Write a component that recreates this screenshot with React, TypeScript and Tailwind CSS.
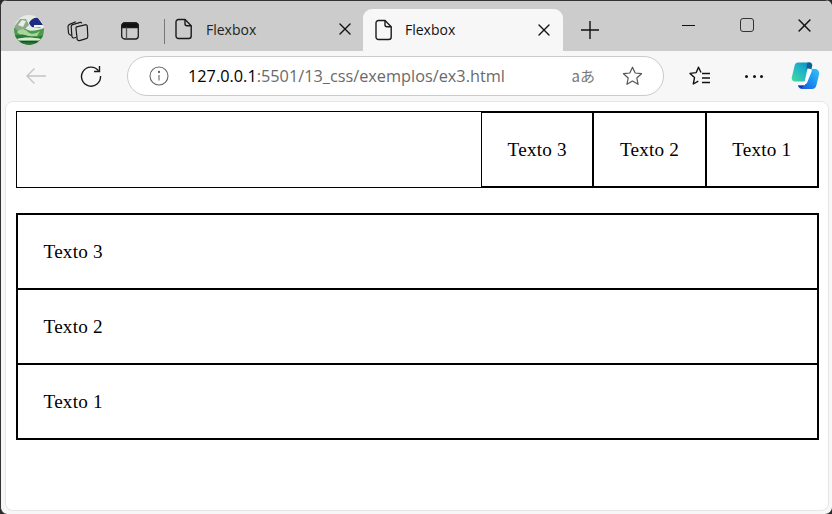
const uiFont = { fontFamily: '"Open Sans", "Noto Sans", sans-serif' };

function FileIcon() {
  return (
    <svg width="18" height="22" viewBox="0 0 18 22" fill="none" stroke="#1a1a1a" strokeWidth="1.4" strokeLinejoin="round">
      <path d="M3.5 1.5h6.5l6.2 6.2V18a2.5 2.5 0 0 1-2.5 2.5H3.5A2.5 2.5 0 0 1 1 18V4a2.5 2.5 0 0 1 2.5-2.5Z" />
      <path d="M10 1.5v4.2a2 2 0 0 0 2 2h4.2" />
    </svg>
  );
}

function CloseIcon({ size = 12 }: { size?: number }) {
  return (
    <svg width={size} height={size} viewBox="0 0 12 12" stroke="#111" strokeWidth="1.4" strokeLinecap="round">
      <path d="M1 1l10 10M11 1L1 11" />
    </svg>
  );
}

function Profile() {
  return (
    <svg width="30" height="30" viewBox="0 0 30 30" className="shrink-0">
      <defs>
        <clipPath id="avatar"><circle cx="15" cy="15" r="15" /></clipPath>
      </defs>
      <g clipPath="url(#avatar)">
        <rect width="30" height="30" fill="#e4ebe0" />
        <path d="M0 13c4-3 8-2 12 1s10 2 18-1v17H0Z" fill="#4c9b4c" />
        <path d="M0 12 6 4h6l3 6-5 5-6 1Z" fill="#8fa88c" />
        <path d="M4 10l4-5 4 1-3 6Z" fill="#e8eee6" />
        <path d="M15 8c2-4 6-6 9-5l5 7-3 3-8-1c-1-1-2-2-3-4Z" fill="#1d2c80" />
        <path d="M20 10h9v2.500h-9Z" fill="#f0f3ee" />
        <path d="M3 17c4-4 8-3 11 0s8 2 12-1l-3 5H7Z" fill="#a8d79c" />
        <path d="M0 21c5-2 9-2 14 0s10 1 16-1v10H0Z" fill="#2b7a38" />
        <path d="M3 24c6-2 16-2 24 0v1.500H3Z" fill="#d9ecd0" />
        <rect x="7" y="26" width="16" height="1.500" fill="#1e4f28" />
      </g>
    </svg>
  );
}

function Copilot() {
  return (
    <svg width="30" height="28" viewBox="0 0 30 28">
      <defs>
        <linearGradient id="cpA" x1="0" y1="1" x2="1" y2="0">
          <stop offset="0" stopColor="#45dc9c" />
          <stop offset="0.55" stopColor="#1fb3c8" />
          <stop offset="1" stopColor="#0f7fc4" />
        </linearGradient>
        <linearGradient id="cpB" x1="0" y1="1" x2="1" y2="0">
          <stop offset="0" stopColor="#1a50dc" />
          <stop offset="0.5" stopColor="#1a90f0" />
          <stop offset="1" stopColor="#38c4f6" />
        </linearGradient>
      </defs>
      <path d="M8 .5h11c2.500 0 3.800 2 3 4.200L17 18c-.5 1-1.200 1.500-2.500 1.500H5C2.500 19.500 1 17 2 14.500L4.500 4C5 2 6 .5 8 .5Z" fill="url(#cpA)" />
      <path d="M17.500 .5H19c2.500 0 3.800 2 3 4.200L21 8l-4 1c-.4-3-.5-6 .5-8.500Z" fill="#0f5f96" />
      <path d="M17 7h8c3 0 4.800 2.500 4 5.500L26.500 23c-.6 2.500-2 4-4.500 4H12c-2 0-3.500-1.200-4-3.500h5c1.500 0 2.500-.6 3-2L21 10c.4-1.300-1-2.500-4-3Z" fill="url(#cpB)" />
      <path d="M8 23.500h5.500c1.500 0 2.500-.6 3-2l1-2.500c-1 2-4 6-6 7-2-.5-3-1.500-3.500-2.500Z" fill="#1238b8" />
      <path d="M17.500 6.500 21 7c1 .5 1 1.500.6 2.500l-4.400 11c-.5 1.200-1.300 1.800-2.600 1.800H11.500c2-.8 2.800-2 3.300-3.300Z" fill="#ffffff" />
    </svg>
  );
}

function FlexItem({ label }: { label: string }) {
  return (
    <div className="border border-black px-[25.6px] pt-[25.8px] pb-[25px] text-[19.2px] leading-[22px] tracking-[0.19px]">{label}</div>
  );
}

export default function App() {
  const labels = ["Texto 1", "Texto 2", "Texto 3"];

  return (
    <div className="h-[514px] w-[832px] overflow-hidden bg-[#2a2a2a]">
      <div className="h-[514px] w-[832px] overflow-hidden bg-[#f7f7f7] flex flex-col rounded-[7px] border-l border-[#333]" style={uiFont}>
        {/* tab strip */}
        <div className="h-[51px] shrink-0 bg-[#cccccc] border-t border-[#333] flex pl-[13px]">
          <div className="mt-[14px] flex items-start">
            <Profile />
            <svg width="22" height="22" viewBox="0 0 22 22" fill="none" stroke="#1a1a1a" strokeWidth="1.2" strokeLinejoin="round" className="ml-[23px] mt-[5px] shrink-0">
              <path d="M9.500 6.800 18 4.800c1.200-.3 2.200.4 2.300 1.600l.5 10c.1 1.200-.5 2-1.600 2.300l-6.700 1.900c-1.300.3-2.300-.4-2.400-1.700L9 8.500c-.1-.8.000-1.500.5-1.700Z" />
              <path d="M9.200 17.500 6.200 18c-.8-.3-1.200-1-1.300-1.800l-.7-9.500c-.1-1 .4-1.800 1.400-2.100l7.600-2.200c.7-.1 1.300.2 1.600 1" />
              <path d="M4.500 15.500 2.500 14.500c-.6-.4-.9-1-1-1.800L1 7c-.1-1.300.5-2.200 1.600-2.600L8.800 1.800" />
            </svg>
            <svg width="20" height="20" viewBox="0 0 20 20" fill="none" stroke="#1a1a1a" strokeWidth="1.3" className="ml-[31px] mt-[6px] shrink-0">
              <rect x="1.700" y="2" width="16.600" height="16" rx="3" />
              <path d="M2 6.500h16v-2C18 3 17 2 15.500 2h-11C3 2 2 3 2 4.500Z" fill="#111" />
              <path d="M6.500 6.500V18" stroke="#555" />
            </svg>
            <div className="ml-[24px] mt-[4px] h-[25px] w-px bg-[#777] shrink-0" />
          </div>
          <div className="w-[198px] flex items-center h-[40px] mt-[8px] pl-[10px] pr-[12px] text-[14px] text-[#222]">
            <FileIcon />
            <span className="ml-[13px] flex-1">Flexbox</span>
            <CloseIcon />
          </div>
          <div className="w-[200px] mt-[8px] h-[42px] bg-[#f7f7f7] rounded-t-[9px] flex items-center pl-[12px] pr-[13px] text-[14px] text-[#111]">
            <FileIcon />
            <span className="ml-[12px] flex-1 -mt-[1px]">Flexbox</span>
            <CloseIcon />
          </div>
          <svg width="18" height="18" viewBox="0 0 18 18" stroke="#111" strokeWidth="1.4" className="ml-[18px] mt-[20px] shrink-0">
            <path d="M9 0v18M0 9h18" />
          </svg>
          <div className="ml-[83px] mt-[18px] flex items-start">
            <div className="w-[13px] h-[7px] border-b border-[#111] mr-[45px]" />
            <div className="w-[14px] h-[14px] border-[1.500px] border-[#333] rounded-[3px] mr-[44px] -mt-[1px]" />
            <CloseIcon size={13} />
          </div>
        </div>

        {/* toolbar */}
        <div className="h-[50px] shrink-0 flex items-center pl-[24px]">
          <svg width="22" height="18" viewBox="0 0 22 18" fill="none" stroke="#c4c4c4" strokeWidth="1.4" className="shrink-0">
            <path d="M21 9H2M9.500 1.500 2 9l7.500 7.500" />
          </svg>
          <svg width="22" height="22" viewBox="0 0 22 22" fill="none" stroke="#1a1a1a" strokeWidth="1.4" className="ml-[33px] shrink-0">
            <path d="M18.500 5.800A9.500 9.500 0 1 0 20.500 11" />
            <path d="M19.500 1v5.500H14" />
          </svg>
          <div className="ml-[25px] w-[537px] h-[40px] bg-white border-[1.500px] border-[#cacaca] rounded-full flex items-center pl-[21px] pr-[20px]">
            <svg width="20" height="20" viewBox="0 0 20 20" fill="none" stroke="#666" strokeWidth="1.1" className="shrink-0">
              <circle cx="10" cy="10" r="9" />
              <path d="M10 9v5.500" />
              <circle cx="10" cy="6" r=".6" fill="#666" />
            </svg>
            <span className="ml-[19px] flex-1 text-[16.300px] text-[#6a6a6a] whitespace-nowrap">
              <span className="text-black">127.0.0.1</span>:5501/13_css/exemplos/ex3.html
            </span>
            <span className="text-[15px] text-[#777] mr-[27px] whitespace-nowrap" style={{ fontFamily: '"Noto Sans CJK JP", sans-serif' }}>aあ</span>
            <svg width="21" height="20" viewBox="0 0 21 20" fill="none" stroke="#555" strokeWidth="1.2" strokeLinejoin="round" className="shrink-0">
              <path d="M10.500 1.200 13.200 7l6.300.7-4.700 4.300 1.300 6.300-5.600-3.200-5.600 3.200L6.200 12 1.500 7.700 7.800 7Z" />
            </svg>
          </div>
          <svg width="22" height="20" viewBox="0 0 22 20" fill="none" stroke="#111" strokeWidth="1.4" strokeLinejoin="round" className="ml-[25px] shrink-0">
            <path d="M12 6.500 9.500 1.200 7.200 6.600 1 7.400l4.500 4.200L4.300 18l5-2.800" />
            <path d="M13 7.500h8M13 12h8M13 16.500h8" />
          </svg>
          <div className="ml-[34px] flex gap-[4.500px] shrink-0">
            <div className="w-[3px] h-[3px] rounded-full bg-[#111]" />
            <div className="w-[3px] h-[3px] rounded-full bg-[#111]" />
            <div className="w-[3px] h-[3px] rounded-full bg-[#111]" />
          </div>
          <div className="ml-[27px] shrink-0 flex"><Copilot /></div>
        </div>

        {/* page */}
        <div
          className="ml-[4px] w-[824px] h-[410px] bg-white rounded-[8px] border border-[#e6e6e6] pt-[9px] pl-[10px] pr-[9px] text-black"
          style={{ fontFamily: '"Liberation Serif", serif' }}
        >
          <div className="flex flex-row-reverse border border-black">
            {labels.map((label) => (
              <FlexItem key={label} label={label} />
            ))}
          </div>
          <div className="flex flex-col-reverse border border-black mt-[25.400px]">
            {labels.map((label) => (
              <FlexItem key={label} label={label} />
            ))}
          </div>
        </div>
      </div>
    </div>
  );
}
